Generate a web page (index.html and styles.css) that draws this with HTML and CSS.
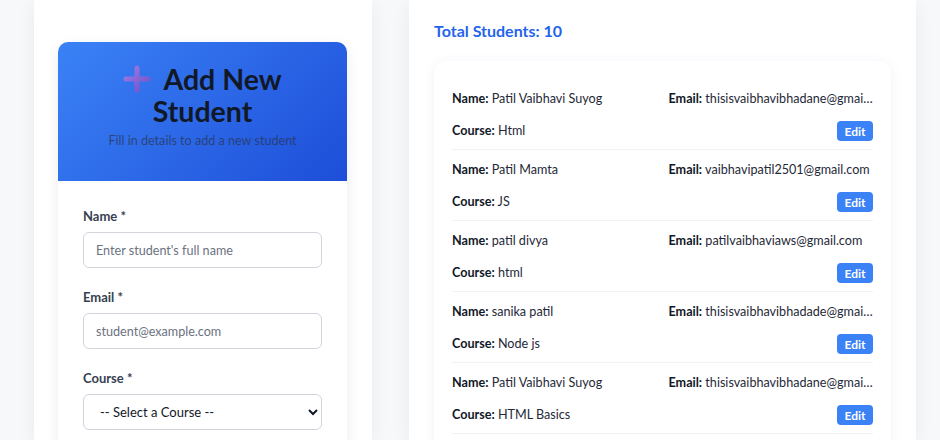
FILE: index.html
```html
<!DOCTYPE html>
<html lang="en">
<head>
<meta charset="utf-8">
<title>Students</title>
<link rel="stylesheet" href="styles.css">
</head>
<body>
<div class="layout">
  <section class="panel panel-left">
    <div class="form-card">
      <header class="form-head">
        <h1 class="form-title"><svg class="plus-icon" width="28" height="28" viewBox="0 0 28 28" aria-hidden="true"><defs><linearGradient id="pg" x1="0" y1="0" x2="1" y2="1"><stop offset="0" stop-color="#9c7be6"/><stop offset="1" stop-color="#7451c8"/></linearGradient></defs><path d="M14 3v22M3 14h22" stroke="url(#pg)" stroke-width="5" stroke-linecap="round" fill="none"/></svg> Add New Student</h1>
        <p class="form-sub">Fill in details to add a new student</p>
      </header>
      <form class="form-body">
        <div class="field">
          <label class="field-label">Name *</label>
          <input class="field-input" type="text" placeholder="Enter student's full name">
        </div>
        <div class="field">
          <label class="field-label">Email *</label>
          <input class="field-input" type="email" placeholder="student@example.com">
        </div>
        <div class="field">
          <label class="field-label">Course *</label>
          <select class="field-input field-select">
            <option>-- Select a Course --</option>
          </select>
        </div>
      </form>
    </div>
  </section>
  <section class="panel panel-right">
    <h2 class="total">Total Students: 10</h2>
    <div class="list-card">
      <div class="item">
        <div class="cell"><b>Name:</b> Patil Vaibhavi Suyog</div>
        <div class="cell"><b>Email:</b> thisisvaibhavibhadane@gmail.com</div>
        <div class="cell"><b>Course:</b> Html</div>
        <div class="cell cell-btn"><button class="edit-btn">Edit</button></div>
      </div>
      <div class="item">
        <div class="cell"><b>Name:</b> Patil Mamta</div>
        <div class="cell"><b>Email:</b> vaibhavipatil2501@gmail.com</div>
        <div class="cell"><b>Course:</b> JS</div>
        <div class="cell cell-btn"><button class="edit-btn">Edit</button></div>
      </div>
      <div class="item">
        <div class="cell"><b>Name:</b> patil divya</div>
        <div class="cell"><b>Email:</b> patilvaibhaviaws@gmail.com</div>
        <div class="cell"><b>Course:</b> html</div>
        <div class="cell cell-btn"><button class="edit-btn">Edit</button></div>
      </div>
      <div class="item">
        <div class="cell"><b>Name:</b> sanika patil</div>
        <div class="cell"><b>Email:</b> thisisvaibhavibhadade@gmail.com</div>
        <div class="cell"><b>Course:</b> Node js</div>
        <div class="cell cell-btn"><button class="edit-btn">Edit</button></div>
      </div>
      <div class="item">
        <div class="cell"><b>Name:</b> Patil Vaibhavi Suyog</div>
        <div class="cell"><b>Email:</b> thisisvaibhavibhadane@gmail.com</div>
        <div class="cell"><b>Course:</b> HTML Basics</div>
        <div class="cell cell-btn"><button class="edit-btn">Edit</button></div>
      </div>
      <div class="item">
        <div class="cell"><b>Name:</b> Patil Mamta</div>
        <div class="cell"><b>Email:</b> vaibhavipatil2501@gmail.com</div>
        <div class="cell"><b>Course:</b> JS</div>
        <div class="cell cell-btn"><button class="edit-btn">Edit</button></div>
      </div>
    </div>
  </section>
</div>
</body>
</html>
```

FILE: styles.css
```css
* { box-sizing: border-box; }
html, body { margin: 0; height: 100%; overflow: hidden; }
body {
  background: #f7f8fa;
  font-family: "Lato", "Open Sans", "Liberation Sans", sans-serif;
  color: #1f2937;
}
.layout {
  display: grid;
  grid-template-columns: 338px 507px;
  column-gap: 37px;
  padding: 0 24px 0 34px;
  height: 100%;
}
.panel {
  background: #fff;
  box-shadow: 0 4px 18px rgba(15, 23, 42, 0.06);
  min-height: 100%;
}
.panel-left { padding: 42px 25px 0 24px; }
.panel-right { padding: 21px 25px 0 25px; }

.form-card {
  border-radius: 10px;
  overflow: hidden;
  box-shadow: 0 4px 14px rgba(15, 23, 42, 0.08);
  background: #fff;
}
.form-head {
  background: linear-gradient(135deg, #3b82f6 0%, #1d4ed8 100%);
  padding: 21px 20px 31px;
  text-align: center;
}
.form-title {
  margin: 0;
  font-size: 28.5px;
  line-height: 32px;
  font-weight: 700;
  color: #111827;
}
.plus-icon { vertical-align: -3px; margin-right: 6px; }
.form-sub {
  margin: 5px 0 0;
  font-size: 12.6px;
  line-height: 18px;
  color: rgba(40, 50, 70, 0.7);
}
.form-body { padding: 27px 25px 20px; }
.field { display: flex; flex-direction: column; gap: 7px; margin-bottom: 21px; }
.field-label {
  font-size: 13px;
  line-height: 17px;
  font-weight: 700;
  color: #374151;
}
.field-input {
  height: 36px;
  border: 1px solid #d1d5db;
  border-radius: 6px;
  padding: 0 12px;
  font-family: inherit;
  font-size: 12.6px;
  color: #111827;
  background: #fff;
}
.field-input::placeholder { color: #6b7280; }
.field-select { padding: 0 8px 0 12px; font-size: 13px; }

.total {
  margin: 0;
  font-size: 16px;
  line-height: 20px;
  font-weight: 700;
  color: #2563eb;
}
.list-card {
  margin-top: 20px;
  background: #fff;
  border-radius: 12px;
  box-shadow: 0 2px 12px rgba(59, 90, 180, 0.08);
  padding: 18px 18px 0;
}
.item {
  display: grid;
  grid-template-columns: 1fr 1fr;
  column-gap: 12px;
  row-gap: 12px;
  padding: 10px 0 8px;
  border-bottom: 1px solid #f1f2f4;
}
.cell {
  font-size: 12.6px;
  line-height: 20px;
  height: 20px;
  white-space: nowrap;
  overflow: hidden;
  text-overflow: ellipsis;
  color: #1f2937;
}
.cell b { font-weight: 700; color: #111827; }
.cell-btn { display: flex; justify-content: flex-end; }
.edit-btn {
  height: 20px;
  width: 36px;
  padding: 0;
  border: 0;
  border-radius: 4px;
  background: #3b82f6;
  color: #fff;
  font-family: inherit;
  font-size: 12px;
  font-weight: 700;
  cursor: pointer;
}
```
